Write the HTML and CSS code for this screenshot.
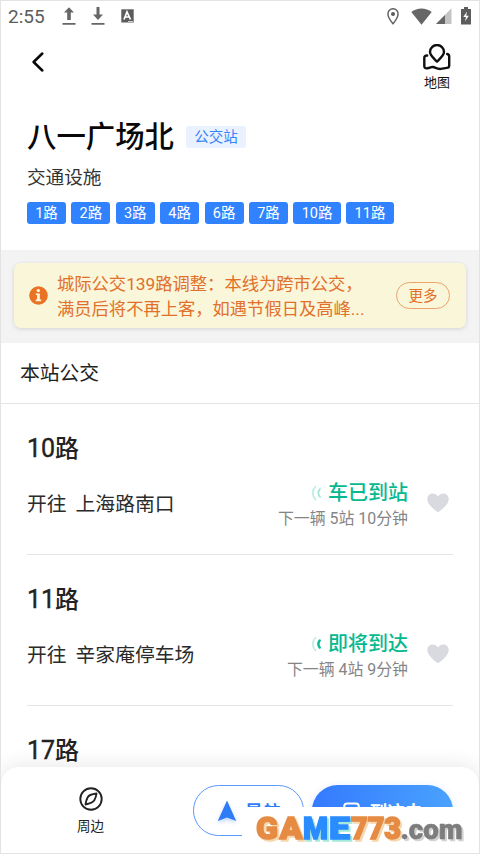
FILE: index.html
```
<!DOCTYPE html>
<html lang="zh-CN">
<head>
<meta charset="utf-8">
<title>八一广场北</title>
<link rel="stylesheet" href="styles.css">
</head>
<body>
<main class="phone">
  <div class="status">
    <span class="clock">2:55</span>
    <svg class="st-up" width="14" height="18" viewBox="0 0 14 18"><path d="M5.200 13V5.500H2L7 .3l5 5.200H8.800V13zM.5 16h13v1.700H.5z" fill="#666"/></svg>
    <svg class="st-down" width="14" height="18" viewBox="0 0 14 18"><path d="M5.500 0h3v7.500H12l-5 5.500-5-5.500h3.500zM.5 16h13v1.700H.5z" fill="#666"/></svg>
    <svg class="st-app" width="13" height="14" viewBox="0 0 13 14"><path d="M.3.300h12.400v13.200H.3z" fill="#5c5c5c"/><path d="M3 10.500 6 3l3.500 7.500M4.300 8h4" fill="none" stroke="#fff" stroke-width="1.700"/><path d="M7 12.500h5" stroke="#ccc"/></svg>
    <span class="spacer"></span>
    <svg class="st-pin" width="12" height="17" viewBox="0 0 12 17"><path d="M6 .8a5 5 0 0 0-5.100 5.100C.9 9.500 6 15.700 6 15.700s5.100-6.200 5.100-9.800A5 5 0 0 0 6 .8z" fill="none" stroke="#5c5c5c" stroke-width="1.400"/><circle cx="6" cy="6" r="2" fill="#5c5c5c"/></svg>
    <svg class="st-wifi" width="21" height="17" viewBox="0 0 21 17"><path d="M.3 4C6-.8 15-.8 20.700 4L10.500 16.700z" fill="#666"/></svg>
    <svg class="st-cell" width="16" height="16" viewBox="0 0 16 16"><path d="M15.500.300V16H0z" fill="#c4c4c4"/><path d="M9 7v9H0z" fill="#666"/></svg>
    <svg class="st-bat" width="10" height="18" viewBox="0 0 10 18"><path d="M3 0h4v2h3v15.500H0V2h3z" fill="#5c5c5c"/><path d="M6 4.500 2.300 10H5l-1 4.500L7.800 8.800H5.200z" fill="#fff"/></svg>
  </div>

  <header class="nav">
    <svg width="12" height="20" viewBox="0 0 12 20"><path d="M10.300 1.500 1.600 10l8.700 8.500" fill="none" stroke="#080808" stroke-width="2.500" stroke-linecap="round" stroke-linejoin="round"/></svg>
    <div class="map">
      <svg width="28" height="27" viewBox="0 0 28 27"><g fill="none" stroke="#101010" stroke-width="2.400" stroke-linecap="round" stroke-linejoin="round"><path d="M14 17.600C10.500 14 7 11.500 7 8a7 7 0 0 1 14 0c0 3.500-3.500 6-7 9.600z"/><path d="M4.200 11.500Q1.300 11.500 1.300 14v8q0 2.600 2.700 2.300c3.600-.4 4-1.700 6-1.300 2.600.5 4 2.200 7.800 1.900 2.700-.2 3.400-.9 6-1q2.400 0 2.400-2.400V12.500q0-2-2-2.500"/></g></svg>
      <span>地图</span>
    </div>
  </header>

  <section class="station">
    <div class="title-row"><h1>八一广场北</h1><span class="badge">公交站</span></div>
    <p class="kind">交通设施</p>
    <div class="lines"><span class="tag">1路</span><span class="tag">2路</span><span class="tag">3路</span><span class="tag">4路</span><span class="tag">6路</span><span class="tag">7路</span><span class="tag wide">10路</span><span class="tag wide">11路</span></div>
  </section>

  <section class="notice-band">
    <div class="notice">
      <svg width="19" height="19" viewBox="0 0 19 19"><circle cx="9.500" cy="9.500" r="9.300" fill="#e87324"/><circle cx="9.300" cy="4.600" r="1.700" fill="#fff7df"/><path d="M6.800 7.500h4v6h1.400v1.700H6.700v-1.700h1.400V9.100H6.800z" fill="#fff7df"/></svg>
      <p>城际公交139路调整：本线为跨市公交，<br>满员后将不再上客，如遇节假日及高峰...</p>
      <span class="more">更多</span>
    </div>
  </section>

  <h2 class="section-title">本站公交</h2>

  <section class="routes">
    <article class="route">
      <h3><span class="num">10</span>路</h3>
      <div class="route-row">
        <span class="dest">开往<span class="name">上海路南口</span></span>
        <div class="arrival">
          <strong><svg width="11" height="16" viewBox="0 0 11 16"><g fill="none" stroke-linecap="round"><path d="M4.500 1.500Q-1 8 4.500 14.500" stroke="#bfeee3" stroke-width="1.800"/><path d="M9 4Q5.600 8 9 12" stroke="#a5e6d6" stroke-width="1.800"/></g></svg>车已到站</strong>
          <small>下一辆 5站 10分钟</small>
        </div>
        <svg class="heart" width="22" height="20" viewBox="0 0 22 20"><path d="M11 19.300C7.500 16.700.3 11.700.3 6c0-6 7.700-7.600 10.700-2.500C14-1.600 21.700 0 21.700 6c0 5.700-7.200 10.700-10.700 13.300z" fill="#d9dae0"/></svg>
      </div>
    </article>
    <article class="route">
      <h3><span class="num">11</span>路</h3>
      <div class="route-row">
        <span class="dest">开往<span class="name">辛家庵停车场</span></span>
        <div class="arrival">
          <strong><svg width="11" height="16" viewBox="0 0 11 16"><g fill="none" stroke-linecap="round"><path d="M4.500 1.500Q-1 8 4.500 14.500" stroke="#c5eee6" stroke-width="1.800"/><path d="M8.700 4.500Q6 8 8.700 11.500" stroke="#08b98f" stroke-width="2.400"/></g></svg>即将到达</strong>
          <small>下一辆 4站 9分钟</small>
        </div>
        <svg class="heart" width="22" height="20" viewBox="0 0 22 20"><path d="M11 19.300C7.500 16.700.3 11.700.3 6c0-6 7.700-7.600 10.700-2.500C14-1.600 21.700 0 21.700 6c0 5.700-7.200 10.700-10.700 13.300z" fill="#d9dae0"/></svg>
      </div>
    </article>
    <article class="route"><h3><span class="num">17</span>路</h3></article>
  </section>

  <footer class="bottom">
    <div class="nearby">
      <svg width="24" height="24" viewBox="0 0 24 24"><g fill="none" stroke="#222" stroke-width="1.900" stroke-linejoin="round"><circle cx="12" cy="12" r="10.700"/><path d="M17.500 6.500Q10 7.500 8.700 10.300 7.200 13 6.500 17.500 13.500 16 15.200 13.500 17 10.500 17.500 6.500z"/></g></svg>
      <span>周边</span>
    </div>
    <div class="button navigate"><svg width="20" height="22" viewBox="0 0 20 22"><path d="M10 .5 19.200 21 10 17.500.8 21z" fill="#2f7cf6"/></svg><span>导航</span></div>
    <div class="button go"><svg width="17" height="18" viewBox="0 0 17 18"><path d="M1.200 13V4.500q0-3 3-3h8.600q3 0 3 3V13z" fill="none" stroke="#fff" stroke-width="2"/></svg><span>到这去</span></div>
  </footer>
  <div class="watermark">
    <svg width="238" height="47" viewBox="0 0 238 47">
      <text class="wm-orange" x="14" y="31.500" textLength="22" lengthAdjust="spacingAndGlyphs">G</text>
      <text class="wm-orange" x="37.500" y="31.500" textLength="23" lengthAdjust="spacingAndGlyphs">A</text>
      <text class="wm-blue" x="61" y="31.500" textLength="25" lengthAdjust="spacingAndGlyphs">M</text>
      <text class="wm-blue" x="87" y="31.500" textLength="21" lengthAdjust="spacingAndGlyphs">E</text>
      <text class="wm-orange" x="109" y="31.500" textLength="50" lengthAdjust="spacingAndGlyphs">773</text>
      <text class="wm-gray" x="158.500" y="31.500" textLength="62" lengthAdjust="spacingAndGlyphs">.com</text>
    </svg>
  </div>
</main>
</body>
</html>
```
FILE: styles.css
```
* { box-sizing: border-box; }
body { margin: 0; background: #fff; font-family: Roboto, "Noto Sans CJK SC", sans-serif; color: #222; }
h1, h2, h3, p { margin: 0; font-weight: 400; }
svg { display: block; flex: none; }
.phone { position: relative; width: 480px; height: 854px; overflow: hidden; border: 1px solid #e3e3e3; background: #fff; white-space: nowrap; }

.status { display: flex; align-items: center; height: 30px; padding: 0 8px 0 7px; }
.clock { width: 54px; padding-top: 1px; font-size: 19px; color: #5c5c5c; }
.st-down { margin-left: 15px; }
.st-app { margin-left: 16px; }
.spacer { flex: 1; }
.st-wifi { margin-left: 12px; }
.st-cell { margin-left: 4px; }
.st-bat { margin-left: 9px; }

.nav { display: flex; align-items: flex-start; justify-content: space-between; height: 79px; padding: 21px 28px 0 31px; }
.map { display: flex; flex-direction: column; align-items: center; margin-top: -8px; font-size: 13px; line-height: 18px; color: #111; }
.map span { margin-top: 3px; }

.station { height: 140px; padding: 4px 26px 0; }
.title-row { display: flex; align-items: center; height: 42px; }
h1 { margin-top: -3px; font-size: 29.400px; font-weight: 500; color: #080808; }
.badge { margin: 3px 0 0 12px; width: 60px; height: 22px; border-radius: 3px; background: #eaf1ff; color: #3583fb; font-size: 14.500px; line-height: 23px; text-align: center; }
.kind { margin-top: 8px; font-size: 18.600px; line-height: 28px; color: #333; }
.lines { display: flex; gap: 5.400px; margin-top: 10px; }
.tag { width: 39px; height: 22px; border-radius: 3px; background: #3082ff; color: #fff; font-size: 14.500px; line-height: 23px; text-align: center; }
.tag.wide { width: 47.500px; }

.notice-band { height: 93px; padding: 13px 13px 0 13px; background: #f3f3f3; }
.notice { display: flex; align-items: center; height: 65px; padding: 0 16px 0 15px; border-radius: 7px; background: #faf6d9; box-shadow: 0 1px 4px #0002; }
.notice p { flex: 1; margin: 3px 0 0 9px; font-size: 17.300px; line-height: 25.500px; color: #e1702b; }
.more { width: 54px; height: 27px; border: 1px solid #eba36b; border-radius: 14px; font-size: 14.500px; line-height: 27px; text-align: center; color: #e1702b; }

.section-title { height: 61px; padding: 1px 0 0 19px; border-bottom: 1px solid #e4e4e4; font-size: 19.800px; line-height: 59px; color: #222; }

.routes { padding: 0 26px; }
.route { height: 151px; padding-top: 26px; border-bottom: 1px solid #e4e4e4; }
.route h3 { font-size: 24px; line-height: 37px; font-weight: 500; color: #222; }
.num { font-weight: 400; font-size: 25px; -webkit-text-stroke: .4px #222; }
.route-row { display: flex; align-items: center; height: 50px; margin-top: 10px; }
.dest { flex: 1; margin-top: -2px; font-size: 19.800px; color: #2b2b2b; }
.name { margin-left: 9px; }
.arrival { display: flex; flex-direction: column; align-items: flex-end; margin-top: 4px; }
.arrival strong { display: flex; align-items: center; gap: 6px; font-size: 20px; line-height: 27px; font-weight: 500; color: #08b98f; }
.arrival small { font-size: 15.900px; line-height: 24px; color: #858585; }
.heart { margin: 0 4px 0 19px; }

.bottom { position: absolute; left: 0; right: 0; bottom: 0; display: flex; height: 86px; padding: 18px 26px 0 54px; border-radius: 18px 18px 0 0; background: #fff; box-shadow: 0 -2px 20px #00000018; }
.nearby { display: flex; flex-direction: column; align-items: center; width: 71px; padding-top: 2px; font-size: 13.500px; line-height: 20px; }
.nearby span { margin-top: 5px; }
.button { display: flex; align-items: center; justify-content: center; height: 51px; border-radius: 26px; font-size: 17.500px; font-weight: 700; }
.navigate { width: 111px; margin-left: 67px; border: 1px solid #5a99fb; gap: 9px; color: #2f7cf6; }
.navigate svg { filter: drop-shadow(0 2px 2px #2f7cf655); }
.go { width: 141px; margin-left: 8px; gap: 10px; color: #fff; background: linear-gradient(90deg, #347aff, #4aa2ff); box-shadow: 0 2px 8px #347aff30; }

.watermark { position: absolute; left: 241px; top: 806px; width: 238px; height: 47px; background: #fff; }
.watermark text { font-family: Roboto, sans-serif; font-size: 31px; font-weight: 900; stroke-width: 1.500px; }
.wm-orange { fill: #e68b43; stroke: #e68b43; filter: drop-shadow(2px 2px 0 #f6d6ad); }
.wm-blue { fill: #2a8cff; stroke: #2a8cff; filter: drop-shadow(2px 2px 0 #a5ead8); }
.wm-gray { fill: #7d7d7d; stroke: #7d7d7d; filter: drop-shadow(2px 2px 0 #d2d2d2); }
.watermark .wm-gray { font-size: 28px; stroke-width: .6px; }
```
